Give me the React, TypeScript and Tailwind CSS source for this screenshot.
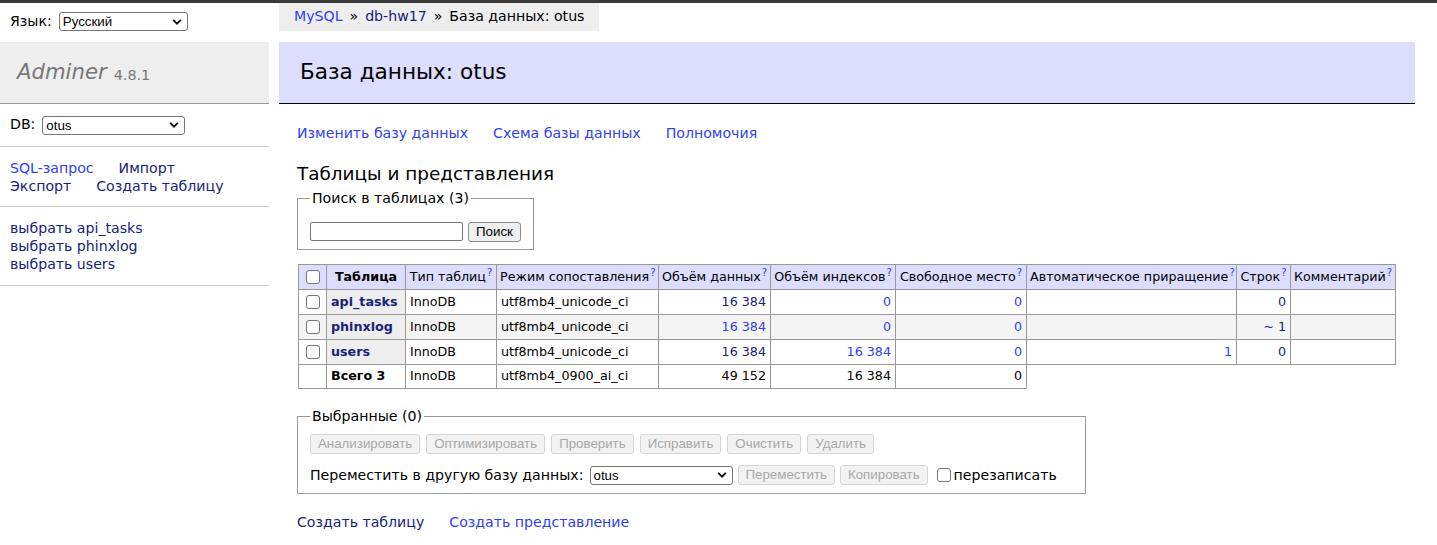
import React from "react";

const BLUE = "text-[#2f40f5]";
const NAVY = "text-[#17227a]";

function Chevron() {
  return (
    <svg width="10" height="7" viewBox="0 0 10 7" className="absolute right-[6px] top-1/2 -translate-y-1/2 pointer-events-none">
      <path d="M1.2 1.4 L5 5.2 L8.8 1.4" fill="none" stroke="#111" strokeWidth="1.9" />
    </svg>
  );
}

function Sel({ value, w }: { value: string; w: string }) {
  return (
    <span className={`relative inline-flex align-middle ${w} h-[19px]`}>
      <select
        defaultValue={value}
        className="appearance-none w-full h-full bg-white border border-[#767676] rounded-[3px] pl-[3px] pr-[18px] text-black font-['Liberation_Sans',Arial,sans-serif] text-[13.3px] leading-[17px]"
      >
        <option>{value}</option>
      </select>
      <Chevron />
    </span>
  );
}

function Box() {
  return <span className="inline-block align-middle w-[14px] h-[14px] border border-[#767676] rounded-[3px] bg-white" />;
}

function Btn({ children, disabled }: { children: React.ReactNode; disabled?: boolean }) {
  return (
    <button
      className={
        "h-[20px] px-[7px] rounded-[3px] border font-['Liberation_Sans',Arial,sans-serif] text-[13.3px] leading-[18px] " +
        (disabled ? "bg-[#f2f2f2] border-[#d6d6d6] text-[#a8a8a8]" : "bg-[#efefef] border-[#8f8f8f] text-black")
      }
    >
      {children}
    </button>
  );
}

function Q() {
  return <span className={`${BLUE} relative top-[-5px] text-[10px] ml-[1px] leading-none`}>?</span>;
}

const th = "border border-[#999] px-[3px] whitespace-nowrap text-center";
const td = "border border-[#999] px-[4px] whitespace-nowrap";

export default function App() {
  return (
    <div className="font-['DejaVu_Sans',Verdana,sans-serif] text-[14.14px] leading-[1.25] text-black bg-white w-[1437px] min-h-[545px]">
      <div className="h-[3px] bg-[#3a3a3a]" />
      <div className="flex">
        {/* Sidebar */}
        <aside className="w-[269px] shrink-0">
          <div className="h-[39px] flex items-center pl-[10px] gap-[7px] pb-[2px]">
            <span>Язык:</span>
            <Sel value="Русский" w="w-[129px]" />
          </div>
          <h1 className="h-[62px] bg-[#eee] border-b border-[#999] flex items-center pl-[17px] text-[#777] font-normal">
            <span className="italic text-[21.2px]">Adminer</span>
            <span className="text-[14.4px] ml-[7px] mt-[4px]">4.8.1</span>
          </h1>
          <div className="border-b border-[#ccc] h-[43px] flex items-center pl-[10px] gap-[7px]">
            <span>DB:</span>
            <Sel value="otus" w="w-[143px]" />
          </div>
          <div className="border-b border-[#ccc] px-[10px] pt-[12px] pb-[11px] leading-[18px]">
            <div className="flex gap-[25px]">
              <span className={BLUE}>SQL-запрос</span>
              <span className={NAVY}>Импорт</span>
            </div>
            <div className="flex gap-[25px]">
              <span className={NAVY}>Экспорт</span>
              <span className={NAVY}>Создать таблицу</span>
            </div>
          </div>
          <div className={`border-b border-[#ccc] px-[10px] pt-[12px] pb-[12px] leading-[18px] ${NAVY}`}>
            <div>выбрать api_tasks</div>
            <div>выбрать phinxlog</div>
            <div>выбрать users</div>
          </div>
        </aside>

        {/* Content */}
        <main className="flex-1 ml-[10px] mr-[22px]">
          <div className="inline-flex items-center h-[28px] bg-[#eee] px-[15px] pb-[1px] whitespace-nowrap">
            <span className={BLUE}>MySQL</span>
            <span className="mx-[7px]">»</span>
            <span className={NAVY}>db-hw17</span>
            <span className="mx-[7px]">»</span>
            <span>База данных: otus</span>
          </div>
          <h2 className="mt-[11px] h-[62px] bg-[#ddf] border-b border-black flex items-center pl-[21px] text-[21.6px] font-normal">
            База данных: otus
          </h2>

          <div className="pl-[18px]">
            <div className={`mt-[20px] flex gap-[25px] leading-[18px] ${BLUE}`}>
              <span>Изменить базу данных</span>
              <span>Схема базы данных</span>
              <span>Полномочия</span>
            </div>

            <h3 className="mt-[20px] text-[18.4px] leading-[23px] font-normal">Таблицы и представления</h3>

            <fieldset className="mt-[5px] inline-block border border-[#999] px-[12px] pb-[7px] pt-[14px]">
              <legend className="px-[2px]">Поиск в таблицах (3)</legend>
              <div className="flex items-center gap-[5px]">
                <input className="w-[153px] h-[19px] border border-[#767676] rounded-[2px] bg-white" />
                <Btn>Поиск</Btn>
              </div>
            </fieldset>

            <table className="mt-[14px] ml-[1px] border-collapse table-fixed w-[1097px] text-[12.7px] leading-[16px]">
              <colgroup>
                <col className="w-[28px]" />
                <col className="w-[79px]" />
                <col className="w-[91px]" />
                <col className="w-[162px]" />
                <col className="w-[112px]" />
                <col className="w-[125px]" />
                <col className="w-[131px]" />
                <col className="w-[210px]" />
                <col className="w-[54px]" />
                <col className="w-[105px]" />
              </colgroup>
              <thead>
                <tr className="h-[25px] bg-[#ddf]">
                  <td className="border border-[#999] text-center"><Box /></td>
                  <th className="border border-[#999] px-[3px] whitespace-nowrap text-center font-bold">Таблица</th>
                  <th className={`${th} font-normal`}>Тип таблиц<Q /></th>
                  <th className={`${th} font-normal`}>Режим сопоставления<Q /></th>
                  <th className={`${th} font-normal`}>Объём данных<Q /></th>
                  <th className={`${th} font-normal`}>Объём индексов<Q /></th>
                  <th className={`${th} font-normal`}>Свободное место<Q /></th>
                  <th className={`${th} font-normal`}>Автоматическое приращение<Q /></th>
                  <th className={`${th} font-normal`}>Строк<Q /></th>
                  <th className={`${th} font-normal`}>Комментарий<Q /></th>
                </tr>
              </thead>
              <tbody>
                <tr className="h-[25px]">
                  <td className={`${td} text-center`}><Box /></td>
                  <th className={`${td} bg-[#eee] text-left font-bold ${NAVY}`}>api_tasks</th>
                  <td className={td}>InnoDB</td>
                  <td className={td}>utf8mb4_unicode_ci</td>
                  <td className={`${td} text-right ${NAVY}`}>16 384</td>
                  <td className={`${td} text-right ${BLUE}`}>0</td>
                  <td className={`${td} text-right ${BLUE}`}>0</td>
                  <td className={td}></td>
                  <td className={`${td} text-right ${NAVY}`}>0</td>
                  <td className={td}></td>
                </tr>
                <tr className="h-[25px] bg-[#f4f4f4]">
                  <td className={`${td} text-center`}><Box /></td>
                  <th className={`${td} bg-[#eee] text-left font-bold ${NAVY}`}>phinxlog</th>
                  <td className={td}>InnoDB</td>
                  <td className={td}>utf8mb4_unicode_ci</td>
                  <td className={`${td} text-right ${BLUE}`}>16 384</td>
                  <td className={`${td} text-right ${BLUE}`}>0</td>
                  <td className={`${td} text-right ${BLUE}`}>0</td>
                  <td className={td}></td>
                  <td className={`${td} text-right ${NAVY}`}>~ 1</td>
                  <td className={td}></td>
                </tr>
                <tr className="h-[25px]">
                  <td className={`${td} text-center`}><Box /></td>
                  <th className={`${td} bg-[#eee] text-left font-bold ${NAVY}`}>users</th>
                  <td className={td}>InnoDB</td>
                  <td className={td}>utf8mb4_unicode_ci</td>
                  <td className={`${td} text-right ${NAVY}`}>16 384</td>
                  <td className={`${td} text-right ${BLUE}`}>16 384</td>
                  <td className={`${td} text-right ${BLUE}`}>0</td>
                  <td className={`${td} text-right ${BLUE}`}>1</td>
                  <td className={`${td} text-right ${NAVY}`}>0</td>
                  <td className={td}></td>
                </tr>
                <tr className="h-[24px]">
                  <td className={td}></td>
                  <th className={`${td} text-left font-bold`}>Всего 3</th>
                  <td className={td}>InnoDB</td>
                  <td className={td}>utf8mb4_0900_ai_ci</td>
                  <td className={`${td} text-right`}>49 152</td>
                  <td className={`${td} text-right`}>16 384</td>
                  <td className={`${td} text-right`}>0</td>
                </tr>
              </tbody>
            </table>

            <div>
              <fieldset className="mt-[19px] inline-block w-[789px] border border-[#999] px-[12px] pb-[8px] pt-[9px]">
                <legend className="px-[2px]">Выбранные (0)</legend>
                <div className="flex gap-[6px]">
                  <Btn disabled>Анализировать</Btn>
                  <Btn disabled>Оптимизировать</Btn>
                  <Btn disabled>Проверить</Btn>
                  <Btn disabled>Исправить</Btn>
                  <Btn disabled>Очистить</Btn>
                  <Btn disabled>Удалить</Btn>
                </div>
                <div className="flex items-center mt-[11px] gap-[5px]">
                  <span className="mr-[1px]">Переместить в другую базу данных:</span>
                  <Sel value="otus" w="w-[143px]" />
                  <Btn disabled>Переместить</Btn>
                  <Btn disabled>Копировать</Btn>
                  <span className="ml-[4px] inline-flex items-center gap-[3px]">
                    <Box />
                    <span>перезаписать</span>
                  </span>
                </div>
              </fieldset>
            </div>

            <div className="mt-[19px] flex gap-[25px] leading-[18px]">
              <span className={NAVY}>Создать таблицу</span>
              <span className={BLUE}>Создать представление</span>
            </div>
          </div>
        </main>
      </div>
    </div>
  );
}
